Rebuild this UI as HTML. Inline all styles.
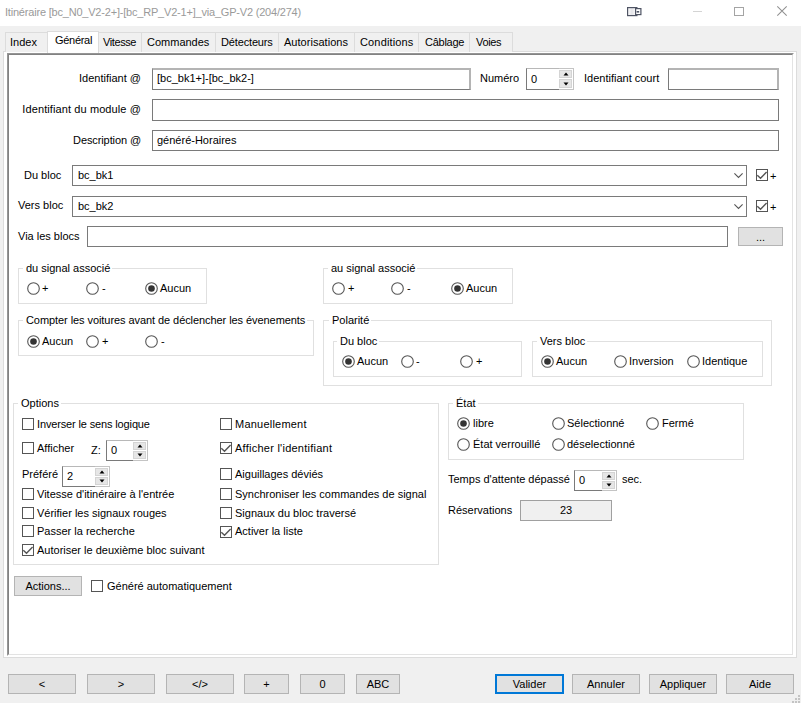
<!DOCTYPE html>
<html><head><meta charset="utf-8"><style>
html,body{margin:0;padding:0;}
body{width:801px;height:703px;overflow:hidden;background:#f0f0f0;position:relative;font-family:"Liberation Sans",sans-serif;}
.b{position:absolute;box-sizing:border-box;}
.t{position:absolute;font-size:11px;line-height:13px;white-space:nowrap;color:#000;}
svg.b{overflow:visible;}
</style></head><body>
<div class="b" style="left:0px;top:0px;width:801px;height:26px;background:#fff"></div>
<div class="t " style="left:5px;top:6px;color:#9a9a9a;letter-spacing:-0.2px">Itinéraire [bc_N0_V2-2+]-[bc_RP_V2-1+]_via_GP-V2 (204/274)</div>
<svg class="b" style="left:626px;top:7px" width="16" height="10" viewBox="0 0 16 10"><defs><linearGradient id="g1" x1="0" x2="1"><stop offset="0" stop-color="#fff"/><stop offset="0.45" stop-color="#e4e4e8"/><stop offset="1" stop-color="#fff"/></linearGradient></defs><rect x="1.6" y="0.6" width="9.3" height="8" fill="url(#g1)" stroke="#4f5464" stroke-width="1.2"/><rect x="9.6" y="1.6" width="5.3" height="6" fill="#fff" stroke="#4f5464" stroke-width="1.2"/><rect x="10.6" y="4" width="2.6" height="1.6" fill="#4f5464"/></svg>
<div class="b" style="left:693px;top:11px;width:9px;height:1px;background:#d4d4d4"></div>
<div class="b" style="left:734px;top:7px;width:10px;height:9px;border:1px solid #a4a4a4"></div>
<svg class="b" style="left:777px;top:6px" width="10" height="10" viewBox="0 0 10 10"><path d="M0.3 0.3 L9.7 9.7 M9.7 0.3 L0.3 9.7" stroke="#909090" stroke-width="1.05"/></svg>
<div class="b" style="left:3px;top:51px;width:794px;height:607px;border:1px solid #dcdcdc;background:#fff"></div>
<div class="b" style="left:5px;top:32px;width:43px;height:20px;border:1px solid #dcdcdc;border-bottom:none;background:#f0f0f0"></div>
<div class="t " style="left:10px;top:36px;letter-spacing:0px">Index</div>
<div class="b" style="left:98px;top:32px;width:44px;height:20px;border:1px solid #dcdcdc;border-bottom:none;background:#f0f0f0"></div>
<div class="t " style="left:103px;top:36px;letter-spacing:-0.4px">Vitesse</div>
<div class="b" style="left:141px;top:32px;width:75px;height:20px;border:1px solid #dcdcdc;border-bottom:none;background:#f0f0f0"></div>
<div class="t " style="left:147px;top:36px;letter-spacing:0px">Commandes</div>
<div class="b" style="left:215px;top:32px;width:64px;height:20px;border:1px solid #dcdcdc;border-bottom:none;background:#f0f0f0"></div>
<div class="t " style="left:221px;top:36px;letter-spacing:-0.15px">Détecteurs</div>
<div class="b" style="left:278px;top:32px;width:77px;height:20px;border:1px solid #dcdcdc;border-bottom:none;background:#f0f0f0"></div>
<div class="t " style="left:284px;top:36px;letter-spacing:0.03px">Autorisations</div>
<div class="b" style="left:354px;top:32px;width:65px;height:20px;border:1px solid #dcdcdc;border-bottom:none;background:#f0f0f0"></div>
<div class="t " style="left:360px;top:36px;letter-spacing:0.15px">Conditions</div>
<div class="b" style="left:418px;top:32px;width:52px;height:20px;border:1px solid #dcdcdc;border-bottom:none;background:#f0f0f0"></div>
<div class="t " style="left:425px;top:36px;letter-spacing:-0.25px">Câblage</div>
<div class="b" style="left:469px;top:32px;width:44px;height:20px;border:1px solid #dcdcdc;border-bottom:none;background:#f0f0f0"></div>
<div class="t " style="left:476px;top:36px;letter-spacing:-0.35px">Voies</div>
<div class="b" style="left:47px;top:31px;width:52px;height:22px;border:1px solid #dcdcdc;border-bottom:none;background:#fff"></div>
<div class="t " style="left:55px;top:34px;letter-spacing:-0.3px">Général</div>
<div class="b" style="left:7px;top:53px;width:787px;height:603px;border-style:solid;border-width:2px;border-color:#959595 #fff #fff #959595;background:#fff"></div>
<div class="b" style="left:8px;top:54px;width:785px;height:601px;border-style:solid;border-width:1px;border-color:#828282 #e3e3e3 #e3e3e3 #828282"></div>
<div class="t" style="right:660px;top:72px;">Identifiant @</div>
<div class="b" style="left:152px;top:68px;width:319px;height:22px;border:1px solid #7a7a7a;border-top:2px solid #b4b4b4;border-right:2px solid #b4b4b4;background:#fff"></div>
<div class="t " style="left:157px;top:72px;">[bc_bk1+]-[bc_bk2-]</div>
<div class="t " style="left:480px;top:72px;">Numéro</div>
<div class="b" style="left:526px;top:68px;width:48px;height:22px;border:1px solid #c4c4c4;background:#fff"></div>
<div class="b" style="left:526px;top:68px;width:33px;height:22px;border-style:solid;border-color:#b8b8b8 transparent #7a7a7a #7a7a7a;border-width:1px 0 1px 1px"></div>
<div class="t " style="left:531px;top:73px;">0</div>
<div class="b" style="left:559px;top:70px;width:13px;height:8px;background:#e6e6e6;border:1px solid #d4d4d4"></div>
<div class="b" style="left:559px;top:79px;width:13px;height:9px;background:#e6e6e6;border:1px solid #d4d4d4"></div>
<svg class="b" style="left:562.5px;top:72.0px" width="6" height="4"><path d="M0.5 3.5 L3 0.5 L5.5 3.5Z" fill="#000"/></svg>
<svg class="b" style="left:562.5px;top:81.5px" width="6" height="4"><path d="M0.5 0.5 L3 3.5 L5.5 0.5Z" fill="#000"/></svg>
<div class="t " style="left:584px;top:72px;">Identifiant court</div>
<div class="b" style="left:668px;top:68px;width:111px;height:22px;border:1px solid #7a7a7a;border-top:2px solid #b4b4b4;border-right:2px solid #b4b4b4;background:#fff"></div>
<div class="t" style="right:660px;top:103px;letter-spacing:0.1px">Identifiant du module @</div>
<div class="b" style="left:152px;top:99px;width:627px;height:22px;border:1px solid #7a7a7a;background:#fff"></div>
<div class="t" style="right:660px;top:134px;letter-spacing:-0.1px">Description @</div>
<div class="b" style="left:152px;top:130px;width:627px;height:21px;border:1px solid #7a7a7a;background:#fff"></div>
<div class="t " style="left:157px;top:134px;">généré-Horaires</div>
<div class="t " style="left:24px;top:169px;">Du bloc</div>
<div class="b" style="left:72px;top:165px;width:675px;height:21px;border:1px solid #7a7a7a;background:#fff"></div>
<div class="t " style="left:78px;top:169px;">bc_bk1</div>
<svg class="b" style="left:734px;top:173px" width="9" height="5" viewBox="0 0 9 5"><path d="M0.4 0.4 L4.5 4.4 L8.6 0.4" fill="none" stroke="#555" stroke-width="1.1"/></svg>
<div class="b" style="left:756px;top:169px;width:12px;height:12px;border:1px solid #555;background:#fff"></div>
<svg class="b" style="left:756px;top:169px" width="12" height="12" viewBox="0 0 12 12"><path d="M1.3 6.3 L4.5 9.3 L10.6 3" fill="none" stroke="#555" stroke-width="1.4"/></svg>
<div class="t " style="left:770px;top:170px;">+</div>
<div class="t " style="left:18px;top:199px;">Vers bloc</div>
<div class="b" style="left:72px;top:196px;width:675px;height:21px;border:1px solid #7a7a7a;background:#fff"></div>
<div class="t " style="left:78px;top:200px;">bc_bk2</div>
<svg class="b" style="left:734px;top:204px" width="9" height="5" viewBox="0 0 9 5"><path d="M0.4 0.4 L4.5 4.4 L8.6 0.4" fill="none" stroke="#555" stroke-width="1.1"/></svg>
<div class="b" style="left:756px;top:200px;width:12px;height:12px;border:1px solid #555;background:#fff"></div>
<svg class="b" style="left:756px;top:200px" width="12" height="12" viewBox="0 0 12 12"><path d="M1.3 6.3 L4.5 9.3 L10.6 3" fill="none" stroke="#555" stroke-width="1.4"/></svg>
<div class="t " style="left:770px;top:201px;">+</div>
<div class="t " style="left:18px;top:230px;">Via les blocs</div>
<div class="b" style="left:87px;top:226px;width:641px;height:21px;border:1px solid #7a7a7a;background:#fff"></div>
<div class="b" style="left:738px;top:227px;width:45px;height:19px;border:1px solid #b4b4b4;background:#e1e1e1"></div>
<div class="t" style="left:738px;width:45px;text-align:center;top:231px;">...</div>
<div class="b" style="left:18px;top:268px;width:189px;height:36px;border:1px solid #e0e0e0"></div>
<div class="t " style="left:23px;top:262px;background:#fff;padding:0 2px 0 3px;">du signal associé</div>
<svg class="b" style="left:27px;top:282px" width="13" height="13" viewBox="0 0 13 13"><circle cx="6.5" cy="6.5" r="5.8" fill="#fff" stroke="#555" stroke-width="1.1"/></svg>
<div class="t " style="left:42px;top:282px;">+</div>
<svg class="b" style="left:86px;top:282px" width="13" height="13" viewBox="0 0 13 13"><circle cx="6.5" cy="6.5" r="5.8" fill="#fff" stroke="#555" stroke-width="1.1"/></svg>
<div class="t " style="left:102px;top:282px;">-</div>
<svg class="b" style="left:145px;top:282px" width="13" height="13" viewBox="0 0 13 13"><circle cx="6.5" cy="6.5" r="5.8" fill="#fff" stroke="#555" stroke-width="1.1"/><circle cx="6.5" cy="6.5" r="3.3" fill="#333"/></svg>
<div class="t " style="left:160px;top:282px;">Aucun</div>
<div class="b" style="left:323px;top:268px;width:190px;height:36px;border:1px solid #e0e0e0"></div>
<div class="t " style="left:328px;top:262px;background:#fff;padding:0 2px 0 3px;">au signal associé</div>
<svg class="b" style="left:332px;top:282px" width="13" height="13" viewBox="0 0 13 13"><circle cx="6.5" cy="6.5" r="5.8" fill="#fff" stroke="#555" stroke-width="1.1"/></svg>
<div class="t " style="left:348px;top:282px;">+</div>
<svg class="b" style="left:391px;top:282px" width="13" height="13" viewBox="0 0 13 13"><circle cx="6.5" cy="6.5" r="5.8" fill="#fff" stroke="#555" stroke-width="1.1"/></svg>
<div class="t " style="left:407px;top:282px;">-</div>
<svg class="b" style="left:451px;top:282px" width="13" height="13" viewBox="0 0 13 13"><circle cx="6.5" cy="6.5" r="5.8" fill="#fff" stroke="#555" stroke-width="1.1"/><circle cx="6.5" cy="6.5" r="3.3" fill="#333"/></svg>
<div class="t " style="left:466px;top:282px;">Aucun</div>
<div class="b" style="left:18px;top:320px;width:296px;height:36px;border:1px solid #e0e0e0"></div>
<div class="t " style="left:23px;top:314px;background:#fff;padding:0 2px 0 3px;letter-spacing:-0.07px;">Compter les voitures avant de déclencher les évenements</div>
<svg class="b" style="left:27px;top:335px" width="13" height="13" viewBox="0 0 13 13"><circle cx="6.5" cy="6.5" r="5.8" fill="#fff" stroke="#555" stroke-width="1.1"/><circle cx="6.5" cy="6.5" r="3.3" fill="#333"/></svg>
<div class="t " style="left:42px;top:335px;">Aucun</div>
<svg class="b" style="left:86px;top:335px" width="13" height="13" viewBox="0 0 13 13"><circle cx="6.5" cy="6.5" r="5.8" fill="#fff" stroke="#555" stroke-width="1.1"/></svg>
<div class="t " style="left:102px;top:335px;">+</div>
<svg class="b" style="left:145px;top:335px" width="13" height="13" viewBox="0 0 13 13"><circle cx="6.5" cy="6.5" r="5.8" fill="#fff" stroke="#555" stroke-width="1.1"/></svg>
<div class="t " style="left:161px;top:335px;">-</div>
<div class="b" style="left:323px;top:320px;width:449px;height:66px;border:1px solid #e0e0e0"></div>
<div class="t " style="left:329px;top:314px;background:#fff;padding:0 2px 0 3px;">Polarité</div>
<div class="b" style="left:333px;top:341px;width:189px;height:36px;border:1px solid #e0e0e0"></div>
<div class="t " style="left:337px;top:335px;background:#fff;padding:0 2px 0 3px;">Du bloc</div>
<svg class="b" style="left:342px;top:355px" width="13" height="13" viewBox="0 0 13 13"><circle cx="6.5" cy="6.5" r="5.8" fill="#fff" stroke="#555" stroke-width="1.1"/><circle cx="6.5" cy="6.5" r="3.3" fill="#333"/></svg>
<div class="t " style="left:357px;top:355px;">Aucun</div>
<svg class="b" style="left:401px;top:355px" width="13" height="13" viewBox="0 0 13 13"><circle cx="6.5" cy="6.5" r="5.8" fill="#fff" stroke="#555" stroke-width="1.1"/></svg>
<div class="t " style="left:416px;top:355px;">-</div>
<svg class="b" style="left:460px;top:355px" width="13" height="13" viewBox="0 0 13 13"><circle cx="6.5" cy="6.5" r="5.8" fill="#fff" stroke="#555" stroke-width="1.1"/></svg>
<div class="t " style="left:476px;top:355px;">+</div>
<div class="b" style="left:532px;top:341px;width:231px;height:36px;border:1px solid #e0e0e0"></div>
<div class="t " style="left:537px;top:335px;background:#fff;padding:0 2px 0 3px;">Vers bloc</div>
<svg class="b" style="left:541px;top:355px" width="13" height="13" viewBox="0 0 13 13"><circle cx="6.5" cy="6.5" r="5.8" fill="#fff" stroke="#555" stroke-width="1.1"/><circle cx="6.5" cy="6.5" r="3.3" fill="#333"/></svg>
<div class="t " style="left:556px;top:355px;">Aucun</div>
<svg class="b" style="left:614px;top:355px" width="13" height="13" viewBox="0 0 13 13"><circle cx="6.5" cy="6.5" r="5.8" fill="#fff" stroke="#555" stroke-width="1.1"/></svg>
<div class="t " style="left:629px;top:355px;">Inversion</div>
<svg class="b" style="left:687px;top:355px" width="13" height="13" viewBox="0 0 13 13"><circle cx="6.5" cy="6.5" r="5.8" fill="#fff" stroke="#555" stroke-width="1.1"/></svg>
<div class="t " style="left:702px;top:355px;">Identique</div>
<div class="b" style="left:13px;top:403px;width:426px;height:162px;border:1px solid #e0e0e0"></div>
<div class="t " style="left:18px;top:397px;background:#fff;padding:0 2px 0 3px;">Options</div>
<div class="b" style="left:22px;top:418px;width:12px;height:12px;border:1px solid #555;background:#fff"></div>
<div class="t " style="left:37px;top:418px;letter-spacing:-0.14px">Inverser le sens logique</div>
<div class="b" style="left:22px;top:442px;width:12px;height:12px;border:1px solid #555;background:#fff"></div>
<div class="t " style="left:37px;top:442px;">Afficher</div>
<div class="t " style="left:91px;top:444px;">Z:</div>
<div class="b" style="left:106px;top:440px;width:42px;height:21px;border:1px solid #c4c4c4;background:#fff"></div>
<div class="b" style="left:106px;top:440px;width:27px;height:21px;border-style:solid;border-color:#b8b8b8 transparent #7a7a7a #7a7a7a;border-width:1px 0 1px 1px"></div>
<div class="t " style="left:111px;top:444px;">0</div>
<div class="b" style="left:133px;top:442px;width:13px;height:8px;background:#e6e6e6;border:1px solid #d4d4d4"></div>
<div class="b" style="left:133px;top:451px;width:13px;height:8px;background:#e6e6e6;border:1px solid #d4d4d4"></div>
<svg class="b" style="left:136.5px;top:444.0px" width="6" height="4"><path d="M0.5 3.5 L3 0.5 L5.5 3.5Z" fill="#000"/></svg>
<svg class="b" style="left:136.5px;top:453.0px" width="6" height="4"><path d="M0.5 0.5 L3 3.5 L5.5 0.5Z" fill="#000"/></svg>
<div class="t " style="left:22px;top:468px;">Préféré</div>
<div class="b" style="left:62px;top:466px;width:48px;height:21px;border:1px solid #c4c4c4;background:#fff"></div>
<div class="b" style="left:62px;top:466px;width:33px;height:21px;border-style:solid;border-color:#b8b8b8 transparent #7a7a7a #7a7a7a;border-width:1px 0 1px 1px"></div>
<div class="t " style="left:67px;top:470px;">2</div>
<div class="b" style="left:95px;top:468px;width:13px;height:8px;background:#e6e6e6;border:1px solid #d4d4d4"></div>
<div class="b" style="left:95px;top:477px;width:13px;height:8px;background:#e6e6e6;border:1px solid #d4d4d4"></div>
<svg class="b" style="left:98.5px;top:470.0px" width="6" height="4"><path d="M0.5 3.5 L3 0.5 L5.5 3.5Z" fill="#000"/></svg>
<svg class="b" style="left:98.5px;top:479.0px" width="6" height="4"><path d="M0.5 0.5 L3 3.5 L5.5 0.5Z" fill="#000"/></svg>
<div class="b" style="left:22px;top:488px;width:12px;height:12px;border:1px solid #555;background:#fff"></div>
<div class="t " style="left:37px;top:488px;">Vitesse d'itinéraire à l'entrée</div>
<div class="b" style="left:22px;top:507px;width:12px;height:12px;border:1px solid #555;background:#fff"></div>
<div class="t " style="left:37px;top:507px;">Vérifier les signaux rouges</div>
<div class="b" style="left:22px;top:525px;width:12px;height:12px;border:1px solid #555;background:#fff"></div>
<div class="t " style="left:37px;top:525px;">Passer la recherche</div>
<div class="b" style="left:22px;top:544px;width:12px;height:12px;border:1px solid #555;background:#fff"></div>
<svg class="b" style="left:22px;top:544px" width="12" height="12" viewBox="0 0 12 12"><path d="M1.3 6.3 L4.5 9.3 L10.6 3" fill="none" stroke="#555" stroke-width="1.4"/></svg>
<div class="t " style="left:37px;top:544px;">Autoriser le deuxième bloc suivant</div>
<div class="b" style="left:220px;top:418px;width:12px;height:12px;border:1px solid #555;background:#fff"></div>
<div class="t " style="left:235px;top:418px;letter-spacing:0.22px">Manuellement</div>
<div class="b" style="left:220px;top:442px;width:12px;height:12px;border:1px solid #555;background:#fff"></div>
<svg class="b" style="left:220px;top:442px" width="12" height="12" viewBox="0 0 12 12"><path d="M1.3 6.3 L4.5 9.3 L10.6 3" fill="none" stroke="#555" stroke-width="1.4"/></svg>
<div class="t " style="left:235px;top:442px;letter-spacing:0.25px">Afficher l'identifiant</div>
<div class="b" style="left:220px;top:468px;width:12px;height:12px;border:1px solid #555;background:#fff"></div>
<div class="t " style="left:235px;top:468px;">Aiguillages déviés</div>
<div class="b" style="left:220px;top:488px;width:12px;height:12px;border:1px solid #555;background:#fff"></div>
<div class="t " style="left:235px;top:488px;">Synchroniser les commandes de signal</div>
<div class="b" style="left:220px;top:507px;width:12px;height:12px;border:1px solid #555;background:#fff"></div>
<div class="t " style="left:235px;top:507px;">Signaux du bloc traversé</div>
<div class="b" style="left:220px;top:526px;width:12px;height:12px;border:1px solid #555;background:#fff"></div>
<svg class="b" style="left:220px;top:526px" width="12" height="12" viewBox="0 0 12 12"><path d="M1.3 6.3 L4.5 9.3 L10.6 3" fill="none" stroke="#555" stroke-width="1.4"/></svg>
<div class="t " style="left:235px;top:525px;">Activer la liste</div>
<div class="b" style="left:448px;top:403px;width:296px;height:57px;border:1px solid #e0e0e0"></div>
<div class="t " style="left:453px;top:397px;background:#fff;padding:0 2px 0 3px;">État</div>
<svg class="b" style="left:457px;top:417px" width="13" height="13" viewBox="0 0 13 13"><circle cx="6.5" cy="6.5" r="5.8" fill="#fff" stroke="#555" stroke-width="1.1"/><circle cx="6.5" cy="6.5" r="3.3" fill="#333"/></svg>
<div class="t " style="left:473px;top:417px;">libre</div>
<svg class="b" style="left:552px;top:417px" width="13" height="13" viewBox="0 0 13 13"><circle cx="6.5" cy="6.5" r="5.8" fill="#fff" stroke="#555" stroke-width="1.1"/></svg>
<div class="t " style="left:567px;top:417px;">Sélectionné</div>
<svg class="b" style="left:646px;top:417px" width="13" height="13" viewBox="0 0 13 13"><circle cx="6.5" cy="6.5" r="5.8" fill="#fff" stroke="#555" stroke-width="1.1"/></svg>
<div class="t " style="left:662px;top:417px;">Fermé</div>
<svg class="b" style="left:457px;top:438px" width="13" height="13" viewBox="0 0 13 13"><circle cx="6.5" cy="6.5" r="5.8" fill="#fff" stroke="#555" stroke-width="1.1"/></svg>
<div class="t " style="left:473px;top:438px;">État verrouillé</div>
<svg class="b" style="left:552px;top:438px" width="13" height="13" viewBox="0 0 13 13"><circle cx="6.5" cy="6.5" r="5.8" fill="#fff" stroke="#555" stroke-width="1.1"/></svg>
<div class="t " style="left:567px;top:438px;">déselectionné</div>
<div class="t " style="left:448px;top:473px;">Temps d'attente dépassé</div>
<div class="b" style="left:574px;top:470px;width:43px;height:21px;border:1px solid #c4c4c4;background:#fff"></div>
<div class="b" style="left:574px;top:470px;width:28px;height:21px;border-style:solid;border-color:#b8b8b8 transparent #7a7a7a #7a7a7a;border-width:1px 0 1px 1px"></div>
<div class="t " style="left:579px;top:474px;">0</div>
<div class="b" style="left:602px;top:472px;width:13px;height:8px;background:#e6e6e6;border:1px solid #d4d4d4"></div>
<div class="b" style="left:602px;top:481px;width:13px;height:8px;background:#e6e6e6;border:1px solid #d4d4d4"></div>
<svg class="b" style="left:605.5px;top:474.0px" width="6" height="4"><path d="M0.5 3.5 L3 0.5 L5.5 3.5Z" fill="#000"/></svg>
<svg class="b" style="left:605.5px;top:483.0px" width="6" height="4"><path d="M0.5 0.5 L3 3.5 L5.5 0.5Z" fill="#000"/></svg>
<div class="t " style="left:622px;top:473px;">sec.</div>
<div class="t " style="left:448px;top:504px;">Réservations</div>
<div class="b" style="left:520px;top:500px;width:92px;height:21px;border:1px solid #a0a0a0;background:#f0f0f0"></div>
<div class="t" style="left:520px;width:92px;text-align:center;top:504px;">23</div>
<div class="b" style="left:14px;top:576px;width:68px;height:20px;border:1px solid #b4b4b4;background:#e1e1e1"></div>
<div class="t" style="left:14px;width:68px;text-align:center;top:580px;">Actions...</div>
<div class="b" style="left:91px;top:580px;width:12px;height:12px;border:1px solid #555;background:#fff"></div>
<div class="t " style="left:107px;top:580px;">Généré automatiquement</div>
<div class="b" style="left:8px;top:674px;width:68px;height:20px;border:1px solid #b4b4b4;background:#e1e1e1"></div>
<div class="t" style="left:8px;width:68px;text-align:center;top:678px;">&lt;</div>
<div class="b" style="left:87px;top:674px;width:68px;height:20px;border:1px solid #b4b4b4;background:#e1e1e1"></div>
<div class="t" style="left:87px;width:68px;text-align:center;top:678px;">&gt;</div>
<div class="b" style="left:166px;top:674px;width:68px;height:20px;border:1px solid #b4b4b4;background:#e1e1e1"></div>
<div class="t" style="left:166px;width:68px;text-align:center;top:678px;">&lt;/&gt;</div>
<div class="b" style="left:244px;top:674px;width:45px;height:20px;border:1px solid #b4b4b4;background:#e1e1e1"></div>
<div class="t" style="left:244px;width:45px;text-align:center;top:678px;">+</div>
<div class="b" style="left:300px;top:674px;width:45px;height:20px;border:1px solid #b4b4b4;background:#e1e1e1"></div>
<div class="t" style="left:300px;width:45px;text-align:center;top:678px;">0</div>
<div class="b" style="left:356px;top:674px;width:44px;height:20px;border:1px solid #b4b4b4;background:#e1e1e1"></div>
<div class="t" style="left:356px;width:44px;text-align:center;top:678px;">ABC</div>
<div class="b" style="left:495px;top:674px;width:69px;height:20px;border:2px solid #0078d7;background:#e1e1e1"></div>
<div class="t" style="left:495px;width:69px;text-align:center;top:678px;">Valider</div>
<div class="b" style="left:572px;top:674px;width:68px;height:20px;border:1px solid #b4b4b4;background:#e1e1e1"></div>
<div class="t" style="left:572px;width:68px;text-align:center;top:678px;">Annuler</div>
<div class="b" style="left:649px;top:674px;width:68px;height:20px;border:1px solid #b4b4b4;background:#e1e1e1"></div>
<div class="t" style="left:649px;width:68px;text-align:center;top:678px;">Appliquer</div>
<div class="b" style="left:726px;top:674px;width:68px;height:20px;border:1px solid #b4b4b4;background:#e1e1e1"></div>
<div class="t" style="left:726px;width:68px;text-align:center;top:678px;">Aide</div>
<div class="b" style="left:798px;top:695px;width:2px;height:2px;background:#c4c4c4"></div>
<div class="b" style="left:795px;top:698px;width:2px;height:2px;background:#c4c4c4"></div>
<div class="b" style="left:798px;top:698px;width:2px;height:2px;background:#c4c4c4"></div>
<div class="b" style="left:792px;top:701px;width:2px;height:2px;background:#c4c4c4"></div>
<div class="b" style="left:795px;top:701px;width:2px;height:2px;background:#c4c4c4"></div>
<div class="b" style="left:798px;top:701px;width:2px;height:2px;background:#c4c4c4"></div>
</body></html>
